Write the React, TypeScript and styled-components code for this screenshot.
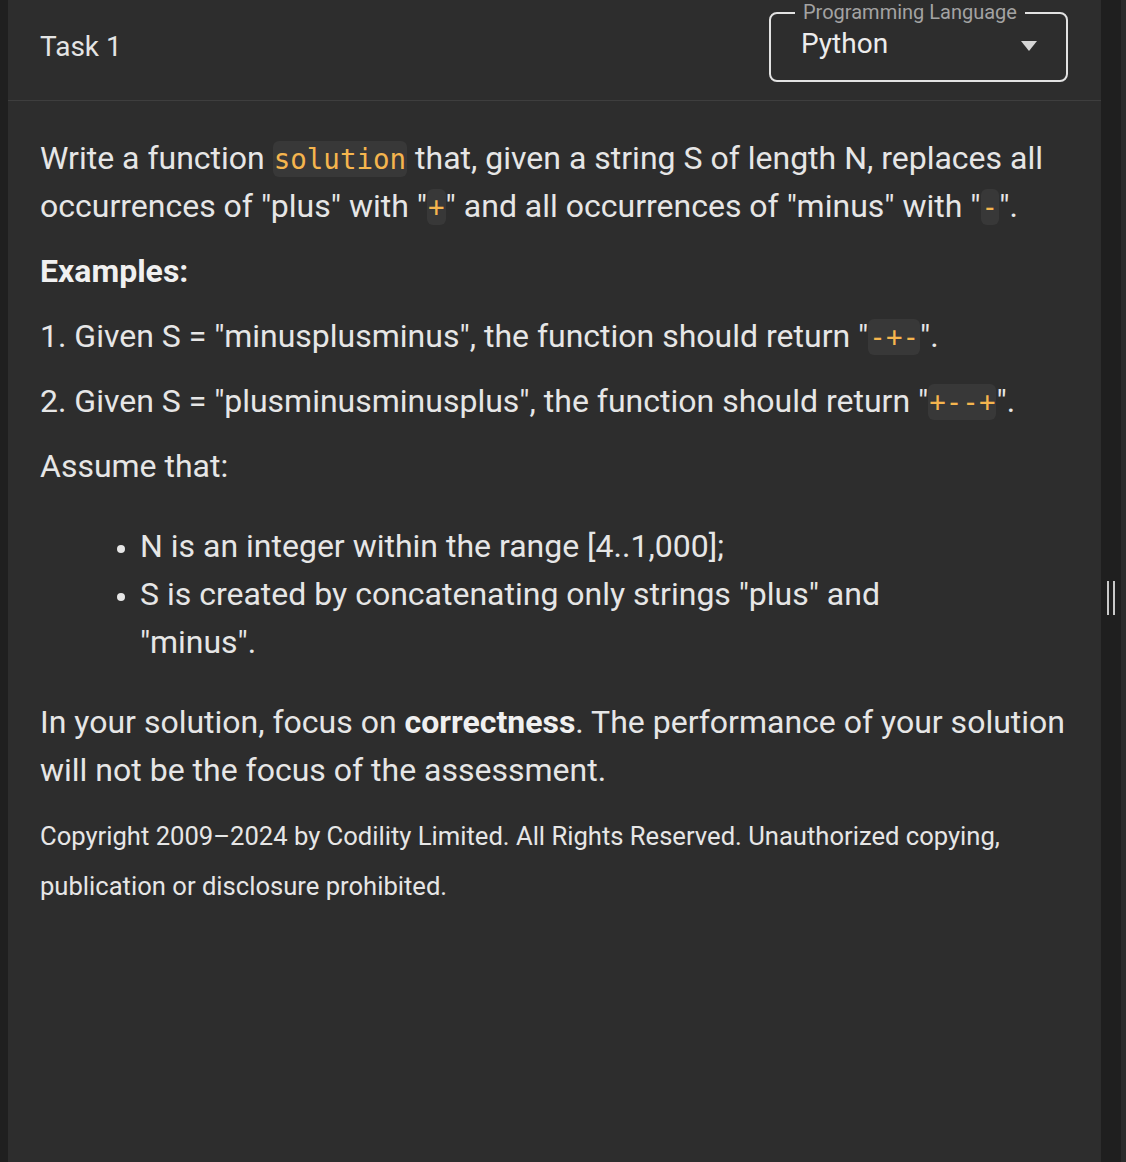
import styled, { createGlobalStyle } from 'styled-components';

const App = () => {
  return (
    <>
      <GlobalStyle />
      <Root>
        <Panel>
          <Header>
            <Title>Task 1</Title>
            <SelectBox>
              <Legend>Programming Language</Legend>
              <SelectValue>Python</SelectValue>
              <Arrow />
            </SelectBox>
          </Header>
          <Content>
            <P>
              Write a function <Code>solution</Code> that, given a string S of length N, replaces all
              occurrences of "plus" with "<Code>+</Code>" and all occurrences of "minus" with "
              <Code>-</Code>".
            </P>
            <P>
              <b>Examples:</b>
            </P>
            <P>
              1. Given S = "minusplusminus", the function should return "<Code>-+-</Code>".
            </P>
            <P>
              2. Given S = "plusminusminusplus", the function should return "<Code>+--+</Code>".
            </P>
            <P>Assume that:</P>
            <Ul>
              <li>N is an integer within the range [4..1,000];</li>
              <li>S is created by concatenating only strings "plus" and "minus".</li>
            </Ul>
            <P>
              In your solution, focus on <b>correctness</b>. The performance of your solution will
              not be the focus of the assessment.
            </P>
            <Copyright>
              Copyright 2009–2024 by Codility Limited. All Rights Reserved. Unauthorized copying,
              publication or disclosure prohibited.
            </Copyright>
          </Content>
        </Panel>
        <Gutter>
          <Handle />
        </Gutter>
        <NextPanel />
      </Root>
    </>
  );
};

export default App;

const GlobalStyle = createGlobalStyle`
  html, body {
    margin: 0;
    padding: 0;
    background: #1f1f1f;
  }
  body {
    font-family: Roboto, 'Liberation Sans', sans-serif;
  }
`;

const Root = styled.div`
  display: flex;
  height: 1162px;
  padding-left: 8px;
  background: #1f1f1f;
  overflow: hidden;
`;

const Panel = styled.section`
  width: 1093px;
  flex-shrink: 0;
  background: #2d2d2d;
  color: #e6e6e6;
  display: flex;
  flex-direction: column;
`;

const Header = styled.header`
  height: 101px;
  box-sizing: border-box;
  border-bottom: 1px solid #3e3e3e;
  padding: 0 33px 7px 32px;
  display: flex;
  align-items: center;
  justify-content: space-between;
`;

const Title = styled.h2`
  margin: 0;
  font-weight: 400;
  font-size: 28px;
  color: #e4e4e4;
`;

const SelectBox = styled.div`
  position: relative;
  width: 299px;
  height: 70px;
  margin-top: 1px;
  box-sizing: border-box;
  border: 2px solid #e2e2e2;
  border-radius: 8px;
  padding: 0 29px 8px 30px;
  display: flex;
  align-items: center;
  justify-content: space-between;
`;

const Legend = styled.span`
  position: absolute;
  top: -13px;
  left: 24px;
  padding: 0 8px;
  background: #2d2d2d;
  font-size: 20px;
  line-height: 22px;
  color: #a3a3a3;
`;

const SelectValue = styled.span`
  font-size: 28px;
  color: #ececec;
`;

const Arrow = styled.span`
  width: 0;
  height: 0;
  margin-top: 6px;
  border-left: 8px solid transparent;
  border-right: 8px solid transparent;
  border-top: 10px solid #d6d6d6;
`;

const Content = styled.div`
  padding: 33px 32px 0 32px;
  font-size: 32px;
  line-height: 48px;
`;

const P = styled.p`
  margin: 0 0 17px;

  b {
    font-weight: 700;
    color: #f0f0f0;
  }
`;

const Code = styled.code`
  font-family: 'DejaVu Sans Mono', 'Liberation Mono', monospace;
  font-size: 27.5px;
  line-height: 1;
  color: #f5b54e;
  background: #383838;
  border-radius: 6px;
  padding: 2px 1px;
`;

const Ul = styled.ul`
  margin: 32px 0;
  padding: 0 100px;

  li::marker {
    font-size: 26px;
  }
`;

const Copyright = styled.p`
  margin: 0;
  font-size: 25.6px;
  line-height: 50px;
  color: #e6e6e6;
`;

const Gutter = styled.div`
  width: 20px;
  flex-shrink: 0;
  display: flex;
  flex-direction: column;
  align-items: center;
  justify-content: center;
  padding-top: 34px;
  box-sizing: border-box;
`;

const Handle = styled.div`
  width: 4px;
  height: 34px;
  border-left: 2px solid #c9c9c9;
  border-right: 2px solid #c9c9c9;
`;

const NextPanel = styled.div`
  flex: 1;
  background: #2b2b2b;
`;
